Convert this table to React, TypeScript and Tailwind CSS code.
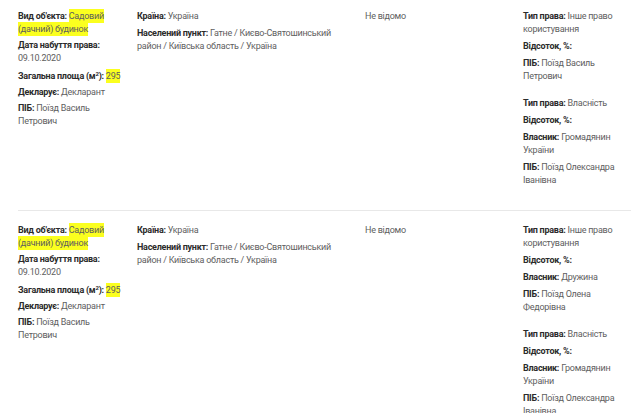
import React from "react";

type Item = { label?: React.ReactNode; value?: React.ReactNode };

const mark = "bg-[#fbff1f] py-[2px]";

function Field({ label, value }: Item) {
  return (
    <p className="leading-[13px]">
      <span className="font-bold text-[#2b2b2b]">{label}</span>{" "}
      <span className="text-[#5e5e5e]">{value}</span>
    </p>
  );
}

function ObjectCol() {
  return (
    <div className="flex flex-col gap-[3px] pr-2">
      <Field
        label="Вид об'єкта:"
        value={
          <>
            <span className={mark}>Садовий</span>{" "}
            <span className={mark}>(дачний) будинок</span>
          </>
        }
      />
      <Field label="Дата набуття права:" value={<><br />09.10.2020</>} />
      <p className="leading-[13px] mt-[2px]">
        <span className="font-bold text-[#2b2b2b]">
          Загальна площа (м<sup className="text-[6px]">2</sup>):
        </span>{" "}
        <span className={`text-[#5e5e5e] ${mark}`}>295</span>
      </p>
      <Field label="Декларує:" value="Декларант" />
      <Field label="ПІБ:" value="Поїзд Василь Петрович" />
    </div>
  );
}

function PlaceCol() {
  return (
    <div className="flex flex-col gap-[4px] pr-2">
      <Field label="Країна:" value="Україна" />
      <Field
        label="Населений пункт:"
        value="Гатне / Києво-Святошинський район / Київська область / Україна"
      />
    </div>
  );
}

function Owners({ groups }: { groups: Item[][] }) {
  return (
    <div className="flex flex-col gap-[14px]">
      {groups.map((g, i) => (
        <div key={i} className="flex flex-col gap-[4px]">
          {g.map((f, j) => (
            <Field key={j} label={f.label} value={f.value} />
          ))}
        </div>
      ))}
    </div>
  );
}

function Row({ groups, first }: { groups: Item[][]; first?: boolean }) {
  return (
    <div
      className={`grid grid-cols-[119px_228px_158px_108px] ${
        first ? "pt-[10px] pb-[23px] border-b border-[#e8e8e8]" : "pt-[13px] pb-2"
      }`}
    >
      <ObjectCol />
      <PlaceCol />
      <div className="text-[#5e5e5e] leading-[13px]">Не відомо</div>
      <Owners groups={groups} />
    </div>
  );
}

export default function App() {
  const first: Item[][] = [
    [
      { label: "Тип права:", value: "Інше право користування" },
      { label: "Відсоток, %:", value: "" },
      { label: "ПІБ:", value: "Поїзд Василь Петрович" },
    ],
    [
      { label: "Тип права:", value: "Власність" },
      { label: "Відсоток, %:", value: "" },
      { label: "Власник:", value: "Громадянин України" },
      { label: "ПІБ:", value: "Поїзд Олександра Іванівна" },
    ],
  ];
  const second: Item[][] = [
    [
      { label: "Тип права:", value: "Інше право користування" },
      { label: "Відсоток, %:", value: "" },
      { label: "Власник:", value: "Дружина" },
      { label: "ПІБ:", value: "Поїзд Олена Федорівна" },
    ],
    [
      { label: "Тип права:", value: "Власність" },
      { label: "Відсоток, %:", value: "" },
      { label: "Власник:", value: "Громадянин України" },
      { label: "ПІБ:", value: "Поїзд Олександра Іванівна" },
    ],
  ];
  return (
    <div
      className="w-[640px] h-[413px] overflow-hidden bg-white pl-[18px] pr-[9px] text-[9px] tracking-[-0.25px]"
      style={{ fontFamily: "Roboto, 'Noto Sans', sans-serif" }}
    >
      <Row groups={first} first />
      <Row groups={second} />
    </div>
  );
}
